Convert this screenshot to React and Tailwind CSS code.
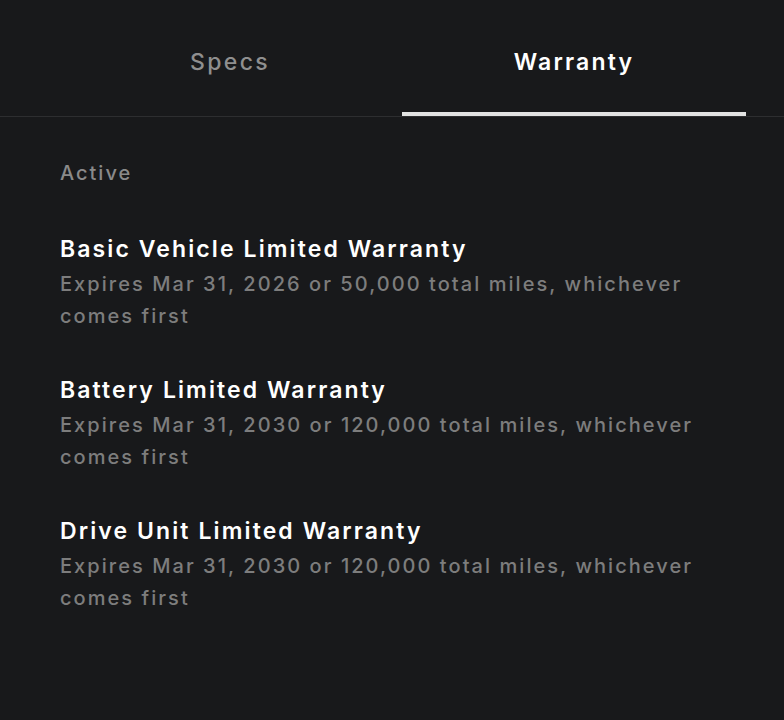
export default function App() {
  const items = [
    { t: "Basic Vehicle Limited Warranty", d: "Expires Mar 31, 2026 or 50,000 total miles, whichever comes first" },
    { t: "Battery Limited Warranty", d: "Expires Mar 31, 2030 or 120,000 total miles, whichever comes first" },
    { t: "Drive Unit Limited Warranty", d: "Expires Mar 31, 2030 or 120,000 total miles, whichever comes first" },
  ];
  return (
    <div className="w-[784px] h-[720px] bg-[#18191b] overflow-hidden" style={{ fontFamily: "Inter, 'Noto Sans', sans-serif" }}>
      <div className="flex border-b border-[#2d2e30] pl-[58px] pr-[38px]">
        <div className="w-[344px] h-[116px] flex items-center justify-center pt-[8px] text-[23px] font-medium tracking-[2.4px] text-[#8f8f8f]">Specs</div>
        <div className="w-[344px] h-[116px] flex flex-col">
          <div className="flex-1 flex items-center justify-center pt-[12px] text-[23px] font-semibold tracking-[2.2px] text-white">Warranty</div>
          <div className="h-[4px] bg-[#e2e2e2]"></div>
        </div>
      </div>
      <div className="px-[60px] pt-[41px]">
        <div className="text-[20px] font-medium tracking-[2px] text-[#8a8a8a] leading-[30px]">Active</div>
        <div className="flex flex-col gap-[42px] mt-[45px]">
          {items.map((it) => (
            <div key={it.t} className="w-[660px]">
              <div className="text-[23px] font-semibold tracking-[2.1px] text-white leading-[32px]">{it.t}</div>
              <div className="text-[20px] font-medium tracking-[2.05px] text-[#7d7d7d] leading-[32px] mt-[3px]">{it.d}</div>
            </div>
          ))}
        </div>
      </div>
    </div>
  );
}
